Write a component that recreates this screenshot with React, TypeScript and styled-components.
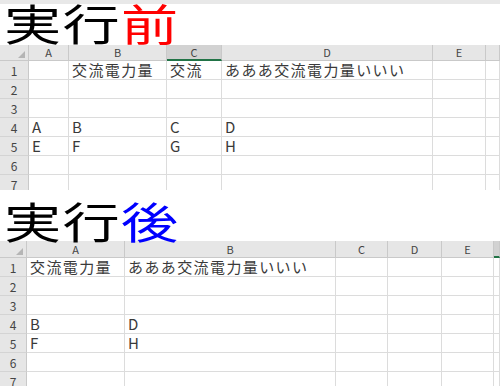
import * as React from 'react';
import styled, { createGlobalStyle } from 'styled-components';

const GlobalStyle = createGlobalStyle`
  html, body {
    margin: 0;
    padding: 0;
    background: #ffffff;
  }
  body {
    font-family: "Noto Sans CJK JP", "Noto Sans", sans-serif;
  }
`;

const GRID = '#dcdcdc';
const HEAD_BG = '#e6e6e6';
const HEAD_LINE = '#c9c9c9';
const EXCEL_GREEN = '#217346';

type SheetData = {
  widths: number[];
  labels: string[];
  rowHeadWidth: number;
  headHeight: number;
  selected: number;
  rows: Record<number, string[]>;
};

const Page = styled.div`
  width: 500px;
  height: 386px;
  overflow: hidden;
  background: #ffffff;
`;

const Shot = styled.section<{ $height?: number; $padTop: number }>`
  width: 500px;
  ${(p) => (p.$height ? `height: ${p.$height}px;` : '')}
  padding-top: ${(p) => p.$padTop}px;
  box-sizing: border-box;
  overflow: hidden;
`;

const TopBand = styled.div`
  height: 4px;
  background: #e8e8e8;
`;

const Title = styled.h1<{ $height: number }>`
  margin: 0;
  height: ${(p) => p.$height}px;
  padding-left: 4px;
  font-family: "Noto Sans CJK JP", sans-serif;
  font-weight: 400;
  font-size: 43px;
  line-height: 36px;
  color: #000000;
  white-space: nowrap;
  position: relative;
  z-index: 1;
`;

const TitleInner = styled.span`
  display: inline-block;
  letter-spacing: 1px;
  transform: scaleX(1.33);
  transform-origin: left center;
`;

const Accent = styled.span<{ $color: string }>`
  color: ${(p) => p.$color};
`;

const Sheet = styled.div<{ $cols: string; $head: number }>`
  display: grid;
  grid-template-columns: ${(p) => p.$cols};
  grid-template-rows: ${(p) => p.$head}px;
  grid-auto-rows: 19px;
  width: max-content;
  font-family: "Noto Sans CJK JP", sans-serif;
`;

const Corner = styled.div`
  position: relative;
  background: ${HEAD_BG};
  border-right: 1px solid ${HEAD_LINE};
  border-bottom: 1px solid ${HEAD_LINE};
  box-sizing: border-box;

  svg {
    position: absolute;
    right: 3px;
    bottom: 2px;
  }
`;

const ColHead = styled.div<{ $selected?: boolean }>`
  display: flex;
  align-items: center;
  justify-content: center;
  background: ${(p) => (p.$selected ? '#d2d2d2' : HEAD_BG)};
  border-right: 1px solid ${HEAD_LINE};
  border-bottom: ${(p) => (p.$selected ? `2px solid ${EXCEL_GREEN}` : `1px solid ${HEAD_LINE}`)};
  box-sizing: border-box;
  font-size: 11px;
  color: #444444;
  line-height: 1;
`;

const RowHead = styled.div`
  display: flex;
  align-items: center;
  justify-content: center;
  padding-top: 2px;
  background: ${HEAD_BG};
  border-right: 1px solid ${HEAD_LINE};
  border-bottom: 1px solid #d4d4d4;
  box-sizing: border-box;
  font-size: 12px;
  color: #444444;
  line-height: 1;
`;

const Cell = styled.div`
  display: flex;
  align-items: flex-end;
  padding: 0 0 1px 3px;
  border-right: 1px solid ${GRID};
  border-bottom: 1px solid ${GRID};
  box-sizing: border-box;
  font-size: 15px;
  letter-spacing: 1.4px;
  line-height: 17px;
  color: #3a3a3a;
  white-space: nowrap;
  overflow: visible;
`;

function Spreadsheet({ widths, labels, rowHeadWidth, headHeight, selected, rows }: SheetData) {
  const cols = [rowHeadWidth, ...widths].map((w) => `${w}px`).join(' ');
  return (
    <Sheet $cols={cols} $head={headHeight}>
      <Corner>
        <svg width="7" height="7" viewBox="0 0 7 7">
          <polygon points="7,0 7,7 0,7" fill="#b5b5b5" />
        </svg>
      </Corner>
      {widths.map((_, i) => (
        <ColHead key={i} $selected={i === selected}>
          {labels[i] ?? ''}
        </ColHead>
      ))}
      {[1, 2, 3, 4, 5, 6, 7].map((r) => (
        <React.Fragment key={r}>
          <RowHead>{r}</RowHead>
          {widths.map((_, c) => (
            <Cell key={c}>{rows[r]?.[c] ?? ''}</Cell>
          ))}
        </React.Fragment>
      ))}
    </Sheet>
  );
}

// the last column is only a sliver at the right edge, so its letter is out of view
const before: SheetData = {
  rowHeadWidth: 29,
  widths: [40, 98, 55, 211, 53, 14],
  labels: ['A', 'B', 'C', 'D', 'E'],
  headHeight: 16,
  selected: 2,
  rows: {
    1: ['', '交流電力量', '交流', 'あああ交流電力量いいい'],
    4: ['A', 'B', 'C', 'D'],
    5: ['E', 'F', 'G', 'H'],
  },
};

const after: SheetData = {
  rowHeadWidth: 27,
  widths: [98, 211, 52, 54, 52, 6],
  labels: ['A', 'B', 'C', 'D', 'E'],
  headHeight: 17,
  selected: 5,
  rows: {
    1: ['交流電力量', 'あああ交流電力量いいい'],
    4: ['B', 'D'],
    5: ['F', 'H'],
  },
};

export default function App() {
  return (
    <Page>
      <GlobalStyle />
      <Shot $height={190} $padTop={0}>
        <TopBand />
        <Title $height={41}>
          <TitleInner>
            実行<Accent $color="#ff0000">前</Accent>
          </TitleInner>
        </Title>
        <Spreadsheet {...before} />
      </Shot>
      <Shot $padTop={12}>
        <Title $height={39}>
          <TitleInner>
            実行<Accent $color="#0000ff">後</Accent>
          </TitleInner>
        </Title>
        <Spreadsheet {...after} />
      </Shot>
    </Page>
  );
}
